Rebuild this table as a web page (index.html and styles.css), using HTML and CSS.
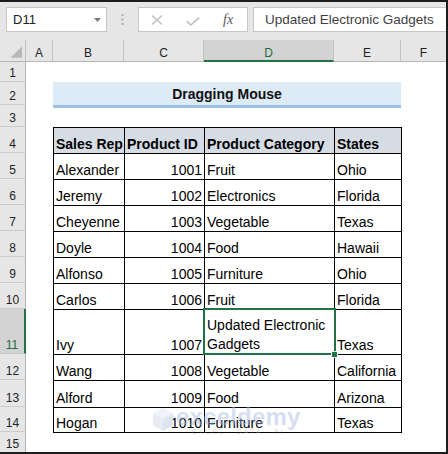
FILE: index.html
```html
<!DOCTYPE html>
<html>
<head>
<meta charset="utf-8">
<link rel="stylesheet" href="styles.css">
</head>
<body>
<div class="app">
  <div class="fbar">
    <div class="namebox">
      <span class="nb-text">D11</span>
      <svg class="nb-arrow" width="7" height="4" viewBox="0 0 7 4"><polygon points="0,0 7,0 3.5,4" fill="#7a7a7a"/></svg>
    </div>
    <div class="dots">
      <svg width="3" height="11" viewBox="0 0 3 11"><rect x="0.5" y="0" width="2" height="2" fill="#adadad"/><rect x="0.5" y="4.5" width="2" height="2" fill="#adadad"/><rect x="0.5" y="9" width="2" height="2" fill="#adadad"/></svg>
    </div>
    <div class="fbtns">
      <svg class="ic-x" width="12" height="10" viewBox="0 0 12 10"><path d="M1 0.5 L11 9.5 M11 0.5 L1 9.5" stroke="#bdbdbd" stroke-width="1.4" fill="none"/></svg>
      <svg class="ic-check" width="14" height="9" viewBox="0 0 14 9"><path d="M0.8 4.2 L4.8 8 L13.2 0.6" stroke="#bdbdbd" stroke-width="1.6" fill="none"/></svg>
      <span class="fx">fx</span>
    </div>
    <div class="finput">Updated Electronic Gadgets</div>
  </div>

  <div class="colhdr">
    <div class="ch corner"><svg width="26" height="21" viewBox="0 0 26 21"><polygon points="23,6 23,18 11,18" fill="#b8b8b8"/></svg></div>
    <div class="ch ca">A</div>
    <div class="ch cb">B</div>
    <div class="ch cc">C</div>
    <div class="ch cd sel">D</div>
    <div class="ch ce">E</div>
    <div class="ch cf">F</div>
  </div>

  <div class="main">
    <div class="rowhdr">
      <div class="rh h20">1</div>
      <div class="rh h23">2</div>
      <div class="rh h22">3</div>
      <div class="rh h26">4</div>
      <div class="rh h26">5</div>
      <div class="rh h26">6</div>
      <div class="rh h26">7</div>
      <div class="rh h26">8</div>
      <div class="rh h26">9</div>
      <div class="rh h26">10</div>
      <div class="rh h45 sel">11</div>
      <div class="rh h26">12</div>
      <div class="rh h27">13</div>
      <div class="rh h25">14</div>
      <div class="rh last">15</div>
    </div>

    <div class="sheet">
      <div class="sp1"></div>
      <div class="title">Dragging Mouse</div>
      <div class="sp2"></div>
      <div class="grid">
        <div class="c hd">Sales Rep</div>
        <div class="c hd">Product ID</div>
        <div class="c hd">Product Category</div>
        <div class="c hd">States</div>

        <div class="c">Alexander</div><div class="c num">1001</div><div class="c">Fruit</div><div class="c">Ohio</div>
        <div class="c">Jeremy</div><div class="c num">1002</div><div class="c">Electronics</div><div class="c">Florida</div>
        <div class="c">Cheyenne</div><div class="c num">1003</div><div class="c">Vegetable</div><div class="c">Texas</div>
        <div class="c">Doyle</div><div class="c num">1004</div><div class="c">Food</div><div class="c">Hawaii</div>
        <div class="c">Alfonso</div><div class="c num">1005</div><div class="c">Furniture</div><div class="c">Ohio</div>
        <div class="c">Carlos</div><div class="c num">1006</div><div class="c">Fruit</div><div class="c">Florida</div>
        <div class="c">Ivy</div><div class="c num">1007</div><div class="c active"><span class="wrap">Updated Electronic Gadgets</span><span class="handle"></span></div><div class="c">Texas</div>
        <div class="c">Wang</div><div class="c num">1008</div><div class="c">Vegetable</div><div class="c">California</div>
        <div class="c">Alford</div><div class="c num">1009</div><div class="c">Food</div><div class="c">Arizona</div>
        <div class="c">Hogan</div><div class="c num">1010</div><div class="c">Furniture</div><div class="c">Texas</div>
      </div>

      <div class="watermark">
        <svg class="wm-icon" width="22" height="25" viewBox="0 0 22 25">
          <polygon points="11,1 21,6.5 21,18.5 11,24 1,18.5 1,6.5" fill="#e3e8f2"/>
          <polygon points="11,1 21,6.5 11,12 1,6.5" fill="#edf0f7"/>
          <polygon points="11,12 21,6.5 21,18.5 11,24" fill="#d9e0ee"/>
        </svg>
        <div class="wm-text">
          <div class="wm-main">exceldemy</div>
          <div class="wm-sub">EXCEL · DATA · BI</div>
        </div>
      </div>
    </div>
  </div>
</div>
</body>
</html>
```

FILE: styles.css
```css
* { box-sizing: border-box; }
html, body { margin: 0; padding: 0; }
body {
  width: 448px;
  height: 454px;
  overflow: hidden;
  background: #ffffff;
  font-family: "Liberation Sans", Arial, sans-serif;
}
.app {
  width: 448px;
  height: 454px;
  border-top: 2px solid #1c1c1c;
  border-right: 2px solid #1c1c1c;
  border-bottom: 2px solid #1c1c1c;
  background: #e6e6e6;
  display: flex;
  flex-direction: column;
  overflow: hidden;
}

/* formula bar */
.fbar {
  height: 38px;
  flex: none;
  display: flex;
  align-items: flex-start;
  padding-top: 5px;
  padding-left: 6px;
}
.namebox {
  width: 101px;
  height: 25px;
  background: #fff;
  border: 1px solid #c6c6c6;
  display: flex;
  align-items: center;
  padding-left: 6px;
  padding-right: 5px;
}
.nb-text { font-size: 13px; color: #222; }
.nb-arrow { margin-left: auto; margin-top: 1px; }
.dots {
  width: 31px;
  height: 25px;
  display: flex;
  align-items: center;
  justify-content: center;
}
.fbtns {
  width: 110px;
  height: 25px;
  background: #fff;
  border: 1px solid #c6c6c6;
  display: flex;
  align-items: center;
  padding-left: 12px;
}
.ic-x { margin-top: 1px; }
.ic-check { margin-left: 23px; margin-top: 4px; }
.fx {
  margin-left: 23px;
  font-family: "Liberation Serif", "Times New Roman", serif;
  font-style: italic;
  font-size: 14px;
  color: #5a5a5a;
  line-height: 14px;
}
.finput {
  flex: 1;
  margin-left: 5px;
  height: 25px;
  background: #fff;
  border: 1px solid #c6c6c6;
  border-right: none;
  padding-left: 11px;
  font-size: 13.5px;
  line-height: 23px;
  color: #3e3e3e;
  white-space: nowrap;
}

/* column headers */
.colhdr {
  height: 22px;
  flex: none;
  display: flex;
}
.ch {
  height: 22px;
  border-right: 1px solid #c3c3c3;
  border-bottom: 1px solid #b5b5b5;
  display: flex;
  align-items: flex-end;
  justify-content: center;
  padding-bottom: 2px;
  font-size: 12px;
  line-height: 12px;
  color: #222;
}
.corner { width: 26px; padding: 0; border-right: 1px solid #c3c3c3; }
.corner svg { display: block; }
.ca { width: 27px; }
.cb { width: 71px; }
.cc { width: 80px; }
.cd { width: 130px; }
.ce { width: 67px; }
.cf { flex: 1; border-right: none; }
.ch.sel {
  background: #d3d3d3;
  color: #1d6b3f;
  border-bottom: 2px solid #217346;
  padding-bottom: 1px;
}

/* main area */
.main {
  flex: 1;
  display: flex;
  min-height: 0;
}
.rowhdr {
  width: 26px;
  flex: none;
  display: flex;
  flex-direction: column;
}
.rh {
  flex: none;
  border-right: 1px solid #b5b5b5;
  border-bottom: 1px solid #cbcbcb;
  display: flex;
  align-items: flex-end;
  justify-content: center;
  padding-bottom: 2px;
  font-size: 12px;
  line-height: 12px;
  color: #222;
}
.h20 { height: 20px; }
.h22 { height: 22px; }
.h23 { height: 23px; }
.h25 { height: 25px; }
.h26 { height: 26px; }
.h27 { height: 27px; }
.h45 { height: 45px; }
.rh.last { flex: 1; border-bottom: none; }
.rh.sel {
  background: #d3d3d3;
  color: #1d6b3f;
  border-right: 2px solid #217346;
}

/* sheet */
.sheet {
  flex: 1;
  background: #fff;
  padding-left: 27px;
  position: relative;
  overflow: hidden;
}
.sp1 { height: 20px; }
.sp2 { height: 19px; }
.title {
  width: 348px;
  height: 26px;
  background: #ddebf7;
  border-bottom: 3px solid #9bc2e6;
  text-align: center;
  font-weight: bold;
  font-size: 14px;
  line-height: 17px;
  padding-top: 4px;
  color: #111;
}
.grid {
  width: 349px;
  display: grid;
  grid-template-columns: 70px 79px 129px 66px;
  grid-template-rows: 25px 25px 25px 25px 25px 25px 25px 44px 25px 26px 24px;
  gap: 1px;
  padding: 1px;
  background: #000;
}
.c {
  background: #fff;
  display: flex;
  align-items: flex-end;
  padding: 0 2px;
  font-size: 14px;
  line-height: 18px;
  color: #000;
  white-space: nowrap;
}
.c.hd {
  background: #d6dce4;
  font-weight: bold;
}
.c.num { justify-content: flex-end; }
.c.active {
  position: relative;
  line-height: 19px;
  white-space: normal;
}
.wrap { display: block; width: 100%; }
.c.active::after {
  content: "";
  position: absolute;
  left: -2px;
  top: -2px;
  right: -2px;
  bottom: -1px;
  border: 2px solid #217346;
  pointer-events: none;
}
.handle {
  position: absolute;
  right: -4px;
  bottom: -4px;
  width: 7px;
  height: 7px;
  background: #217346;
  border: 1px solid #fff;
  z-index: 2;
}

/* watermark */
.watermark {
  position: absolute;
  left: 126px;
  top: 344px;
  display: flex;
  align-items: flex-start;
  gap: 2px;
  opacity: 0.85;
  pointer-events: none;
}
.wm-icon { margin-top: 1px; }
.wm-text { display: flex; flex-direction: column; align-items: center; }
.wm-main {
  font-size: 24px;
  font-weight: bold;
  line-height: 22px;
  color: rgba(165, 185, 230, 0.55);
  letter-spacing: 0.2px;
}
.wm-sub {
  font-size: 7px;
  line-height: 8px;
  letter-spacing: 2px;
  color: rgba(170, 170, 170, 0.5);
}
```
